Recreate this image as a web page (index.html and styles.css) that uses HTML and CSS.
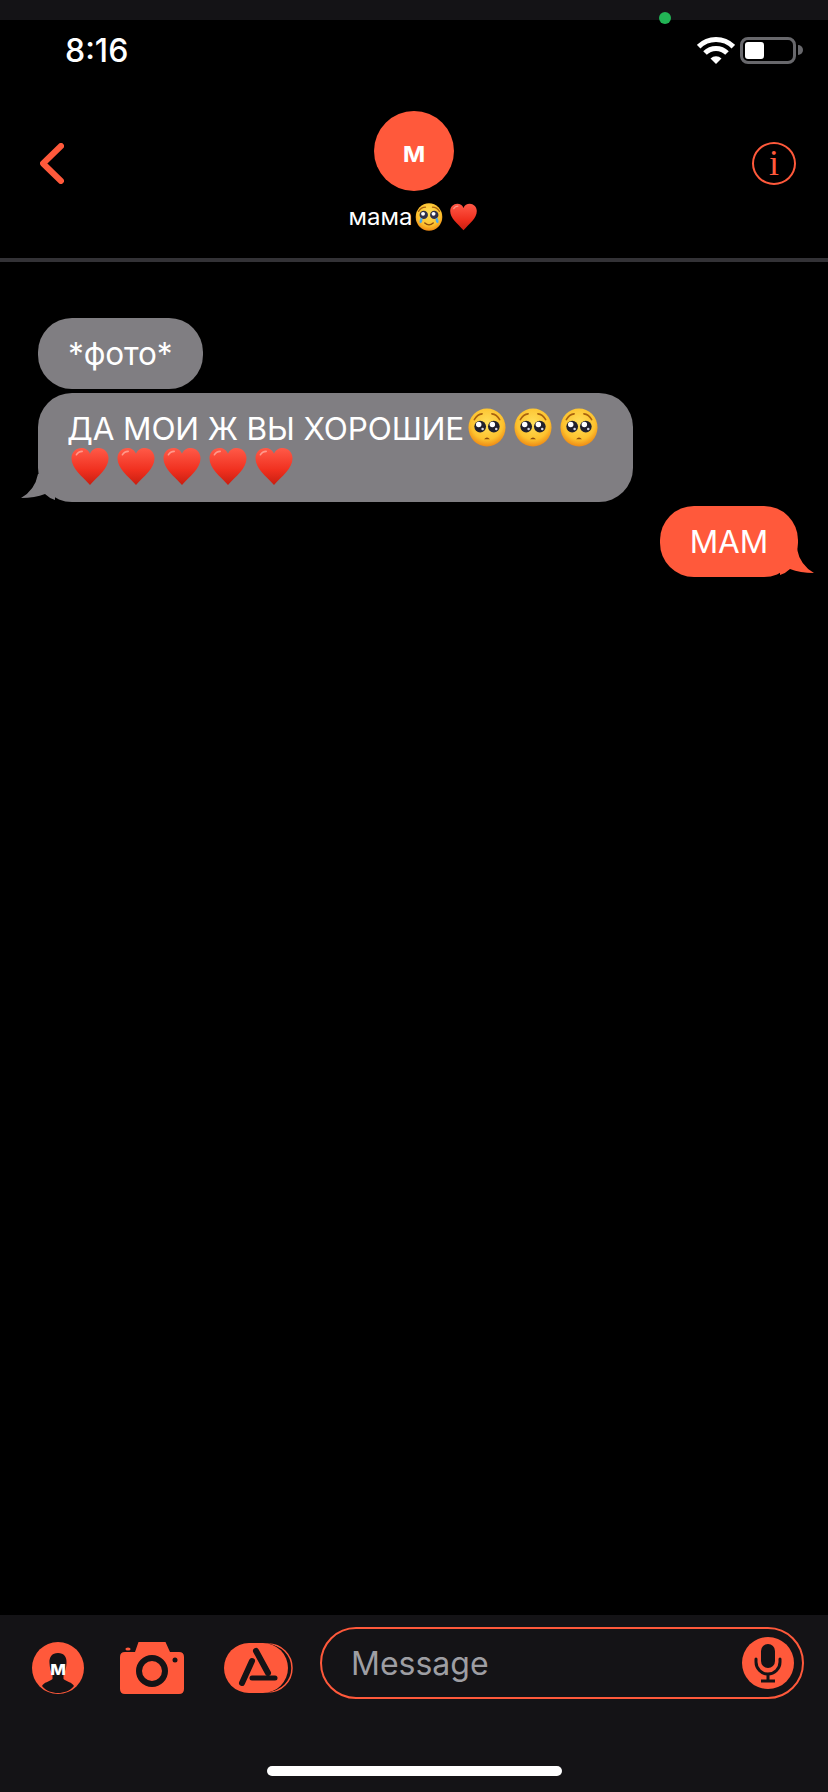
FILE: index.html
```html
<!DOCTYPE html>
<html>
<head>
    <title>Messages</title>
    <link rel="stylesheet" href="styles.css">
</head>
<body>
    <svg class="defs" width="0" height="0">
        <defs>
            <radialGradient id="faceFill" cx="50%" cy="38%" r="62%">
                <stop offset="0" stop-color="#ffdf5a"/>
                <stop offset="0.7" stop-color="#fdc22e"/>
                <stop offset="1" stop-color="#ee8a14"/>
            </radialGradient>
            <linearGradient id="heartFill" x1="0" y1="0" x2="0" y2="1">
                <stop offset="0" stop-color="#ff5a48"/>
                <stop offset="0.6" stop-color="#f0301f"/>
                <stop offset="1" stop-color="#c81e10"/>
            </linearGradient>
            <symbol id="pleading" viewBox="0 0 40 40">
                <ellipse cx="20" cy="20" rx="19" ry="19.5" fill="url(#faceFill)"/>
                <path d="M7 12 Q10 6.5 15 6" fill="none" stroke="#a8620f" stroke-width="1.6" stroke-linecap="round"/>
                <path d="M33 12 Q30 6.5 25 6" fill="none" stroke="#a8620f" stroke-width="1.6" stroke-linecap="round"/>
                <circle cx="13" cy="19" r="6" fill="#20202c"/>
                <circle cx="27" cy="19" r="6" fill="#20202c"/>
                <circle cx="11.5" cy="17" r="2.8" fill="#fff"/>
                <circle cx="25.5" cy="17" r="2.8" fill="#fff"/>
                <circle cx="15.5" cy="21.5" r="1.3" fill="#d8d8e8"/>
                <circle cx="29.5" cy="21.5" r="1.3" fill="#d8d8e8"/>
                <path d="M17 32 Q20 28.5 23 32 Z" fill="#8a4a0c"/>
            </symbol>
            <symbol id="teary" viewBox="0 0 40 40">
                <ellipse cx="20" cy="20" rx="19" ry="19.5" fill="url(#faceFill)"/>
                <path d="M5 12 Q9 6 15 6" fill="none" stroke="#a8620f" stroke-width="1.8" stroke-linecap="round"/>
                <path d="M35 12 Q31 6 25 6" fill="none" stroke="#a8620f" stroke-width="1.8" stroke-linecap="round"/>
                <circle cx="12.5" cy="17" r="6" fill="#30304a"/>
                <circle cx="27.5" cy="17" r="6" fill="#30304a"/>
                <circle cx="11.5" cy="15.5" r="2.8" fill="#fff"/>
                <circle cx="26.5" cy="15.5" r="2.8" fill="#fff"/>
                <path d="M8 21 Q5 27 7.5 29 Q11 28 10.5 22 Z" fill="#4aa8ee"/>
                <path d="M32 21 Q35 27 32.5 29 Q29 28 29.5 22 Z" fill="#4aa8ee"/>
                <path d="M14 28.5 Q20 34 26 28.5" fill="none" stroke="#8a4a0c" stroke-width="2" stroke-linecap="round"/>
            </symbol>
            <symbol id="heart" viewBox="0 0 40 40">
                <path d="M20 39 C12 30 1 22 1 11.5 C1 5 6 1 11 1 C15 1 18.5 3 20 7 C21.5 3 25 1 29 1 C34 1 39 5 39 11.5 C39 22 28 30 20 39 Z" fill="url(#heartFill)"/>
                <path d="M6 8 Q8 4.5 12 4.5" fill="none" stroke="#ff9a8c" stroke-width="1.6" stroke-linecap="round"/>
            </symbol>
        </defs>
    </svg>

    <div class="phone">
        <div class="top-strip">
            <span class="camera-dot"></span>
        </div>

        <div class="status-bar">
            <span class="time">8:16</span>
            <div class="status-icons">
                <svg class="wifi" viewBox="0 0 38 27">
                    <path d="M1.7 9.7 A24.5 24.5 0 0 1 36.3 9.7" fill="none" stroke="#fff" stroke-width="5"/>
                    <path d="M8 16 A15.5 15.5 0 0 1 30 16" fill="none" stroke="#fff" stroke-width="5"/>
                    <path d="M19 27 L13.5 21.5 A7.8 7.8 0 0 1 24.5 21.5 Z" fill="#fff"/>
                </svg>
                <div class="battery"><div class="battery-level"></div></div>
                <div class="battery-cap"></div>
            </div>
        </div>

        <div class="header">
            <svg class="back" viewBox="0 0 24 41">
                <path d="M21 3 L3 20.5 L21 38" fill="none" stroke="#ff593b" stroke-width="6" stroke-linecap="round" stroke-linejoin="round"/>
            </svg>
            <div class="contact">
                <div class="avatar">м</div>
                <div class="contact-name">
                    <span>мама</span>
                    <svg class="name-face"><use href="#teary"/></svg>
                    <svg class="name-heart"><use href="#heart"/></svg>
                </div>
            </div>
            <div class="info">i</div>
        </div>

        <div class="divider"></div>

        <div class="messages">
            <div class="bubble incoming">*фото*</div>
            <div class="bubble incoming tail-left">ДА МОИ Ж ВЫ ХОРОШИЕ<svg class="emoji"><use href="#pleading"/></svg><svg class="emoji"><use href="#pleading"/></svg><svg class="emoji"><use href="#pleading"/></svg><svg class="emoji"><use href="#heart"/></svg><svg class="emoji"><use href="#heart"/></svg><svg class="emoji"><use href="#heart"/></svg><svg class="emoji"><use href="#heart"/></svg><svg class="emoji"><use href="#heart"/></svg></div>
            <div class="bubble outgoing tail-right">МАМ</div>
        </div>

        <div class="composer">
            <div class="composer-row">
                <svg class="tool tool-memoji" viewBox="0 0 52 52">
                    <circle cx="26" cy="26" r="26" fill="#ff593b"/>
                    <path d="M26 11 C32 11 35 15 34.5 21 C34.3 26 33 30 31.5 33 L31.5 37 C35 40 40 40 42 44 C38 49 32 51 26 51 C20 51 14 49 10 44 C12 40 17 40 20.5 37 L20.5 33 C19 30 17.7 26 17.5 21 C17 15 20 11 26 11 Z" fill="#141316"/>
                    <text x="26" y="33" text-anchor="middle" class="memoji-letter">м</text>
                </svg>
                <svg class="tool tool-camera" viewBox="0 0 64 52">
                    <path d="M18.5 0 H45.5 L50 10 H59 Q64 10 64 15 V47 Q64 52 59 52 H5 Q0 52 0 47 V15 Q0 10 5 10 H15 Z" fill="#ff593b"/>
                    <ellipse cx="8" cy="7" rx="2.6" ry="1.6" fill="#ff593b"/>
                    <circle cx="32" cy="29" r="13" fill="none" stroke="#141316" stroke-width="6"/>
                    <circle cx="55" cy="18" r="2.5" fill="#141316"/>
                </svg>
                <svg class="tool tool-store" viewBox="0 0 69 52">
                    <rect x="5" y="2" width="63" height="48" rx="24" fill="none" stroke="#ff593b" stroke-width="1.5"/>
                    <rect x="0" y="1" width="65" height="50" rx="25" fill="#141316"/>
                    <rect x="0" y="1" width="64" height="50" rx="25" fill="#ff593b"/>
                    <path d="M18 41 L28 19" fill="none" stroke="#141316" stroke-width="6" stroke-linecap="round"/>
                    <path d="M32 9 L44 31" fill="none" stroke="#141316" stroke-width="6" stroke-linecap="round"/>
                    <path d="M28 36 L51 36" fill="none" stroke="#141316" stroke-width="5" stroke-linecap="round"/>
                </svg>
                <div class="message-input">
                    <span class="placeholder">Message</span>
                    <svg class="mic" viewBox="0 0 52 52">
                        <circle cx="26" cy="26" r="26" fill="#ff593b"/>
                        <rect x="19" y="7" width="14" height="24" rx="7" fill="#141316"/>
                        <path d="M14 22 V25 A12 12 0 0 0 38 25 V22" fill="none" stroke="#141316" stroke-width="3" stroke-linecap="round"/>
                        <path d="M26 37 V43 M19 44 H33" fill="none" stroke="#141316" stroke-width="3"/>
                    </svg>
                </div>
            </div>
            <div class="home-bar"></div>
        </div>
    </div>
</body>
</html>
```

FILE: styles.css
```css
body {
    margin: 0;
    background: #000;
    font-family: Inter, "Liberation Sans", sans-serif;
    color: #fff;
}

.defs {
    position: absolute;
}

.phone {
    width: 828px;
    height: 1792px;
    display: flex;
    flex-direction: column;
    overflow: hidden;
}

.top-strip {
    height: 20px;
    background: #141316;
    position: relative;
}

.camera-dot {
    position: absolute;
    left: 659px;
    top: 12px;
    width: 12px;
    height: 12px;
    border-radius: 50%;
    background: #22b455;
}

/* Status bar */
.status-bar {
    height: 60px;
    padding: 0 25px 0 65px;
    display: flex;
    align-items: center;
    justify-content: space-between;
}

.time {
    font-size: 32px;
    font-weight: 500;
}

.status-icons {
    display: flex;
    align-items: center;
}

.wifi {
    width: 38px;
    height: 27px;
    margin-right: 5px;
}

.battery {
    width: 56px;
    height: 27px;
    box-sizing: border-box;
    border: 3px solid #68686c;
    border-radius: 8px;
    padding: 2px;
}

.battery-level {
    width: 19px;
    height: 100%;
    background: #fff;
    border-radius: 3px;
}

.battery-cap {
    width: 5px;
    height: 10px;
    margin-left: 2px;
    background: #68686c;
    border-radius: 0 5px 5px 0;
}

/* Header */
.header {
    height: 178px;
    padding: 0 32px 0 40px;
    display: grid;
    grid-template-columns: 1fr auto 1fr;
    align-items: start;
}

.back {
    width: 24px;
    height: 41px;
    margin-top: 63px;
}

.contact {
    padding-top: 31px;
    margin-left: -8px;
    display: flex;
    flex-direction: column;
    align-items: center;
}

.avatar {
    width: 80px;
    height: 80px;
    border-radius: 50%;
    background: #ff593b;
    font-size: 29px;
    font-weight: 600;
    display: flex;
    align-items: center;
    justify-content: center;
}

.contact-name {
    margin-top: 12px;
    height: 27px;
    font-size: 24px;
    display: flex;
    align-items: center;
}

.name-face {
    width: 28px;
    height: 28px;
    margin-left: 3px;
}

.name-heart {
    width: 31px;
    height: 28px;
    margin-left: 5px;
}

.info {
    justify-self: end;
    width: 44px;
    height: 43px;
    margin-top: 62px;
    box-sizing: border-box;
    border: 2px solid #ff593b;
    border-radius: 50%;
    color: #ff593b;
    font-family: "Liberation Serif", serif;
    font-size: 36px;
    line-height: 39px;
    text-align: center;
}

.divider {
    height: 4px;
    background: #333236;
}

/* Messages */
.messages {
    flex: 1;
    padding-top: 56px;
    display: flex;
    flex-direction: column;
    align-items: flex-start;
    gap: 4px;
}

.bubble {
    position: relative;
    box-sizing: border-box;
    max-width: 595px;
    padding: 16px 30px;
    border-radius: 34px;
    font-size: 31.5px;
    letter-spacing: -0.12px;
    line-height: 39px;
}

.incoming {
    margin-left: 38px;
    background: #807e82;
}

.outgoing {
    align-self: flex-end;
    margin-right: 30px;
    background: #ff593b;
}

.tail-left {
    padding: 16px 22px 15px 29px;
}

.tail-left::after,
.tail-right::after {
    content: "";
    position: absolute;
    bottom: 0;
    width: 34px;
    height: 28px;
    background: inherit;
    clip-path: path("M17 0 Q14 16 0 24 Q14 24 24 20 Q28 24 34 26 L34 0 Z");
}

.tail-left::after {
    left: -17px;
}

.tail-right::after {
    right: -16px;
    transform: scaleX(-1);
}

.emoji {
    width: 40px;
    height: 39px;
    margin: -1px 3px 0;
    vertical-align: top;
}

/* Composer */
.composer {
    height: 177px;
    background: #141316;
    padding-top: 12px;
    box-sizing: border-box;
}

.composer-row {
    padding-left: 32px;
    display: flex;
    align-items: flex-start;
}

.tool {
    height: 52px;
    margin-top: 15px;
}

.tool-memoji {
    width: 52px;
}

.memoji-letter {
    fill: #fff;
    font-family: Inter, "Liberation Sans", sans-serif;
    font-size: 20px;
    font-weight: 700;
}

.tool-camera {
    width: 64px;
    margin-left: 36px;
}

.tool-store {
    width: 69px;
    margin-left: 40px;
}

.message-input {
    width: 484px;
    height: 72px;
    margin-left: 27px;
    padding: 0 8px 0 29px;
    box-sizing: border-box;
    border: 2px solid #ff593b;
    border-radius: 36px;
    display: flex;
    align-items: center;
    justify-content: space-between;
}

.placeholder {
    font-size: 32px;
    color: #9e9ea3;
}

.mic {
    width: 52px;
    height: 52px;
}

.home-bar {
    width: 295px;
    height: 10px;
    margin: 67px auto 0;
    background: #fff;
    border-radius: 5px;
}
```
